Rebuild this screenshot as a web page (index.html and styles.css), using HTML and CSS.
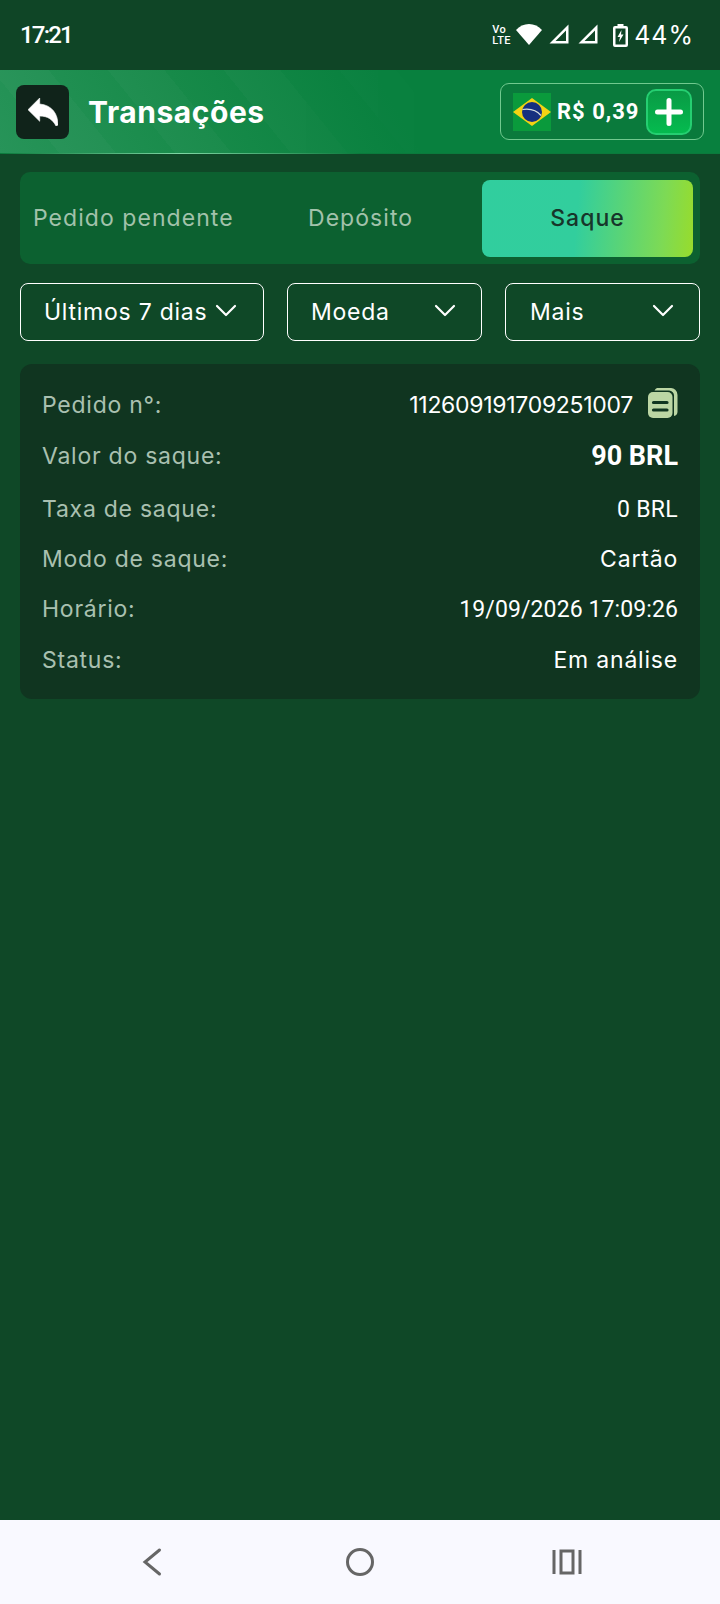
FILE: index.html
```html
<!DOCTYPE html>
<html lang="pt-BR">
<head>
<meta charset="utf-8">
<title>Transações</title>
<link rel="stylesheet" href="styles.css">
</head>
<body>
<div class="screen">
  <div class="statusbar">
    <span class="clock">17:21</span>
    <div class="status-right">
      <span class="volte">Vo<br>LTE</span>
      <svg class="ic-wifi" width="26" height="21" viewBox="0 0 26 21"><path d="M0 6C3.500 2 8 0 13 0s9.500 2 13 6L13 21z" fill="#fff"/></svg>
      <svg class="ic-sig" width="20" height="20" viewBox="0 0 20 20"><path d="M19.500.5v19H.5zM17 6.500L6.500 17H17z" fill="#fff" fill-rule="evenodd"/></svg>
      <svg class="ic-sig ic-sig2" width="20" height="20" viewBox="0 0 20 20"><path d="M19.500.5v19H.5zM17 6.500L6.500 17H17z" fill="#fff" fill-rule="evenodd"/></svg>
      <svg class="ic-batt" width="15" height="23" viewBox="0 0 15 23"><path d="M4.500 0h6v2H13a2 2 0 0 1 2 2v17a2 2 0 0 1-2 2H2a2 2 0 0 1-2-2V4a2 2 0 0 1 2-2h2.500zM2.500 4.500v16h10v-16zM8.500 6L4.500 13H7l-1 5 4.500-7.500H8z" fill="#fff" fill-rule="evenodd"/></svg>
      <span class="pct">44%</span>
    </div>
  </div>

  <header class="topbar">
    <button class="back" type="button" aria-label="Voltar">
      <svg width="30" height="28" viewBox="0 0 30 28"><path d="M11.700 0L0 11.700 11.700 23.300V18C20 18 25 22 28 28L30 27C30 16 24 7 11.700 6z" fill="#fff" stroke="#fff" stroke-width=".6" stroke-linejoin="round"/></svg>
    </button>
    <h1 class="title">Transações</h1>
    <div class="wallet">
      <svg class="flag" width="38" height="38" viewBox="0 0 38 38"><rect width="38" height="38" fill="#0a9a3c"/><path d="M19 5L38 19 19 33 0 19z" fill="#f3d313"/><circle cx="19" cy="19" r="10" fill="#16307f"/><path d="M9.500 16.500c7-1 14 .5 18.500 6" stroke="#d8e0e0" stroke-width="1.200" fill="none"/></svg>
      <span class="amount">R$ 0,39</span>
      <span class="plus">
        <svg width="28" height="28" viewBox="0 0 28 28"><path d="M14 2.500v23M2.500 14h23" stroke="#fff" stroke-width="5" stroke-linecap="round"/></svg>
      </span>
    </div>
  </header>

  <main class="content">
    <nav class="tabs">
      <span class="tab tab-pending">Pedido pendente</span>
      <span class="tab tab-deposit">Depósito</span>
      <span class="tab tab-active">Saque</span>
    </nav>

    <div class="filters">
      <div class="filter f-date"><span>Últimos 7 dias</span><svg class="chev" width="22" height="13" viewBox="0 0 22 13"><path d="M2 2l9 9 9-9" fill="none" stroke="#fff" stroke-width="2.200" stroke-linecap="round" stroke-linejoin="round"/></svg></div>
      <div class="filter f-coin"><span>Moeda</span><svg class="chev" width="22" height="13" viewBox="0 0 22 13"><path d="M2 2l9 9 9-9" fill="none" stroke="#fff" stroke-width="2.200" stroke-linecap="round" stroke-linejoin="round"/></svg></div>
      <div class="filter f-more"><span>Mais</span><svg class="chev" width="22" height="13" viewBox="0 0 22 13"><path d="M2 2l9 9 9-9" fill="none" stroke="#fff" stroke-width="2.200" stroke-linecap="round" stroke-linejoin="round"/></svg></div>
    </div>

    <section class="card">
      <div class="row r1"><span class="lbl">Pedido n°:</span><span class="val val-id">112609191709251007<svg class="copy" width="30" height="30" viewBox="0 0 30 30"><path d="M9 0h13a7 7 0 0 1 7.500 7v17a4.500 4.500 0 0 1-3.500 4V8a5 5 0 0 0-5-5.500H6.500A6 6 0 0 1 9 0z" fill="#bcd6a4"/><rect x="0" y="4" width="24.500" height="26" rx="5" fill="#bcd6a4"/><path d="M5.500 14.500h13.500M5.500 22h13.500" stroke="#103520" stroke-width="3.200" stroke-linecap="round"/></svg></span></div>
      <div class="row r2"><span class="lbl">Valor do saque:</span><span class="val val-bold">90 BRL</span></div>
      <div class="row r3"><span class="lbl">Taxa de saque:</span><span class="val val-rb">0 BRL</span></div>
      <div class="row r4"><span class="lbl">Modo de saque:</span><span class="val">Cartão</span></div>
      <div class="row r5"><span class="lbl">Horário:</span><span class="val val-rb val-date">19/09/2026 17:09:26</span></div>
      <div class="row r6"><span class="lbl">Status:</span><span class="val">Em análise</span></div>
    </section>
  </main>

  <footer class="navbar">
    <svg width="30" height="30" viewBox="0 0 30 30"><path d="M21.500 3L7 15l14.500 12" fill="none" stroke="#666" stroke-width="3" stroke-linecap="round"/></svg>
    <svg width="30" height="30" viewBox="0 0 30 30"><circle cx="15" cy="15" r="12.500" fill="none" stroke="#666" stroke-width="3"/></svg>
    <svg width="30" height="26" viewBox="0 0 30 26"><path d="M2 1v24M28 1v24" stroke="#666" stroke-width="3"/><rect x="9" y="2" width="12" height="22" fill="none" stroke="#666" stroke-width="3"/></svg>
  </footer>
</div>
</body>
</html>
```

FILE: styles.css
```css
* { box-sizing: border-box; }
html, body { margin: 0; padding: 0; }
body { width: 720px; height: 1604px; overflow: hidden; font-family: Inter, "Noto Sans", sans-serif; color: #fff; background: #0f4827; }
.screen { display: flex; flex-direction: column; height: 1604px; }

.statusbar { height: 70px; flex: none; display: flex; align-items: center; justify-content: space-between; background: #0f4526; padding: 0 26px 0 20px; }
.clock { font: 500 24px/1 Roboto, sans-serif; letter-spacing: -1.8px; }
.status-right { display: flex; align-items: center; }
.volte { font: 500 11px/11px Roboto, sans-serif; letter-spacing: 0.4px; text-align: left; margin-right: 5px; width: 19px; white-space: nowrap; }
.ic-wifi { margin-right: 7px; margin-top: -2px; }
.ic-sig { margin-right: 9px; margin-top: -2px; }
.ic-sig2 { margin-right: 15px; }
.ic-batt { margin-right: 6px; }
.pct { font: 400 25px/1 Inter, sans-serif; letter-spacing: 1px; }

.topbar { height: 84px; flex: none; display: flex; align-items: center; padding: 0 16px; position: relative; background: linear-gradient(60deg, #279459 0, #178a49 28%, #08803e 55%, #08803e 100%); border-bottom: 1px solid #0b7a3c; }
.topbar::before { content: ""; position: absolute; inset: 0; background: repeating-linear-gradient(51deg, rgba(255,255,255,0) 0 46px, rgba(255,255,255,.025) 46px 90px); mask-image: linear-gradient(90deg, #000 0, #000 35%, transparent 65%); }
.topbar::after { content: ""; position: absolute; left: 0; right: 360px; bottom: -1px; height: 1px; background: linear-gradient(90deg, transparent, #7fd6a4 50%, transparent); }
.back { position: relative; z-index: 1; width: 53px; height: 54px; border: 0; padding: 0; border-radius: 8px; background: #10231a; display: flex; align-items: center; justify-content: center; margin-right: 19px; }
.title { position: relative; z-index: 1; margin: 0; font: 700 30px/1 Inter, sans-serif; letter-spacing: 0.55px; flex: 1; }
.wallet { position: relative; z-index: 1; width: 204px; height: 57px; border: 1px solid #71c98f; border-radius: 9px; display: flex; align-items: center; padding: 0 11px 0 12px; background: #0a7a3c; }
.flag { flex: none; margin-right: 6px; }
.amount { font: 700 22px/1 Roboto, sans-serif; flex: 1; letter-spacing: 1px; }
.plus { width: 46px; height: 46px; border-radius: 10px; background: linear-gradient(180deg, #099a45, #05bb4f); border: 2px solid #25cf71; display: flex; align-items: center; justify-content: center; }

.content { flex: 1; padding: 18px 20px 0; }
.tabs { height: 92px; border-radius: 10px; background: #0c6130; display: flex; align-items: center; padding: 0 7px 0 13px; }
.tab { font-size: 23px; line-height: 1; color: #a2c2ab; letter-spacing: 1.05px; }
.tab-pending { width: 275px; }
.tab-deposit { width: 174px; }
.tab-active { width: 211px; height: 77px; border-radius: 8px; background: linear-gradient(95deg, #31ce9e 0, #32ce9d 45%, #7dda55 85%, #98dc2c 100%); color: #17352a; font-weight: 500; display: flex; align-items: center; justify-content: center; }

.filters { display: flex; justify-content: space-between; margin-top: 19px; }
.filter { height: 58px; border: 1px solid #fff; border-radius: 8px; display: flex; align-items: center; justify-content: space-between; font-size: 23px; letter-spacing: 0.75px; }
.f-date { width: 244px; padding: 0 26px 0 23px; }
.f-coin { width: 195px; padding: 0 25px 0 23px; }
.f-more { width: 195px; padding: 0 25px 0 24px; }
.chev { flex: none; margin-top: -4px; }

.card { margin-top: 23px; height: 335px; border-radius: 12px; background: #103520; padding: 16px 22px 0; }
.row { display: flex; align-items: center; justify-content: space-between; height: 50px; }
.r2 { height: 52px; }
.r3 { height: 54px; }
.r4 { height: 46px; }
.r5 { height: 54px; }
.r6 { height: 48px; }
.lbl { font-size: 23px; color: #a9c0b0; letter-spacing: 0.75px; }
.val { font-size: 23px; letter-spacing: 0.8px; }
.val-id { display: flex; align-items: center; letter-spacing: -0.3px; }
.copy { margin-left: 15px; margin-top: -4px; }
.val-bold { font: 700 27px/1 Roboto, sans-serif; letter-spacing: 0; }
.val-rb { font: 400 23px/1 Roboto, sans-serif; letter-spacing: 0.3px; }
.val-date { letter-spacing: 0.1px; }

.navbar { height: 84px; flex: none; background: #f9f9ff; display: flex; align-items: center; padding: 0 138px; justify-content: space-between; }
```
